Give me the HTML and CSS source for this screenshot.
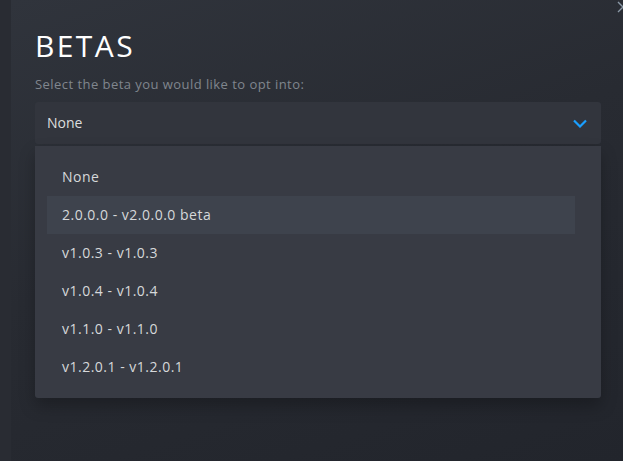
FILE: index.html
```html
<!DOCTYPE html>
<html>
<head>
<meta charset="utf-8">
<link rel="stylesheet" href="styles.css">
</head>
<body>
<div class="dialog">
  <svg class="close" width="12" height="12" viewBox="0 0 12 12"><path d="M1 1L11 11M11 1L1 11" stroke="#8a98a6" stroke-width="1.4" fill="none"/></svg>
  <h1 class="title">BETAS</h1>
  <div class="subtitle">Select the beta you would like to opt into:</div>
  <div class="select">
    <span class="select-value">None</span>
    <svg class="chevron" width="14" height="9" viewBox="0 0 14 9"><path d="M1 1.5L7 7.5L13 1.5" stroke="#1a9fff" stroke-width="2.2" fill="none"/></svg>
  </div>
  <div class="menu">
    <div class="item">None</div>
    <div class="item active">2.0.0.0 - v2.0.0.0 beta</div>
    <div class="item">v1.0.3 - v1.0.3</div>
    <div class="item">v1.0.4 - v1.0.4</div>
    <div class="item">v1.1.0 - v1.1.0</div>
    <div class="item">v1.2.0.1 - v1.2.0.1</div>
  </div>
</div>
</body>
</html>
```

FILE: styles.css
```css
html, body {
  margin: 0;
  padding: 0;
  height: 100%;
  overflow: hidden;
}
body {
  background: #292c33;
  font-family: "Open Sans", "Noto Sans", sans-serif;
}
.dialog {
  position: relative;
  margin-left: 11px;
  height: 461px;
  box-sizing: border-box;
  padding: 28px 22px 0 24px;
  background: linear-gradient(160deg, #30343c 0%, #282b32 45%, #22252c 100%);
}
.close {
  position: absolute;
  top: 1px;
  left: 606px;
}
.title {
  margin: 0;
  font-size: 30px;
  line-height: 36px;
  font-weight: 400;
  letter-spacing: 2.4px;
  color: #ffffff;
}
.subtitle {
  margin-top: 11px;
  font-size: 13px;
  line-height: 18px;
  letter-spacing: 0.45px;
  color: #80868e;
}
.select {
  margin-top: 9px;
  height: 42px;
  box-sizing: border-box;
  padding: 0 14px 0 12px;
  display: flex;
  align-items: center;
  justify-content: space-between;
  background: #32353d;
  border-radius: 3px;
  color: #dcdedf;
  font-size: 14px;
}
.select-value {
  padding-bottom: 1px;
}
.menu {
  margin-top: 2px;
  padding: 12px 26px 12px 12px;
  background: #383b44;
  border-radius: 0 0 3px 3px;
  box-shadow: 0 8px 16px rgba(0,0,0,0.25);
}
.item {
  height: 38px;
  box-sizing: border-box;
  padding: 0 0 1px 15px;
  display: flex;
  align-items: center;
  font-size: 14px;
  letter-spacing: 0.5px;
  color: #d6d8da;
}
.item.active {
  background: #3e434d;
}
```
